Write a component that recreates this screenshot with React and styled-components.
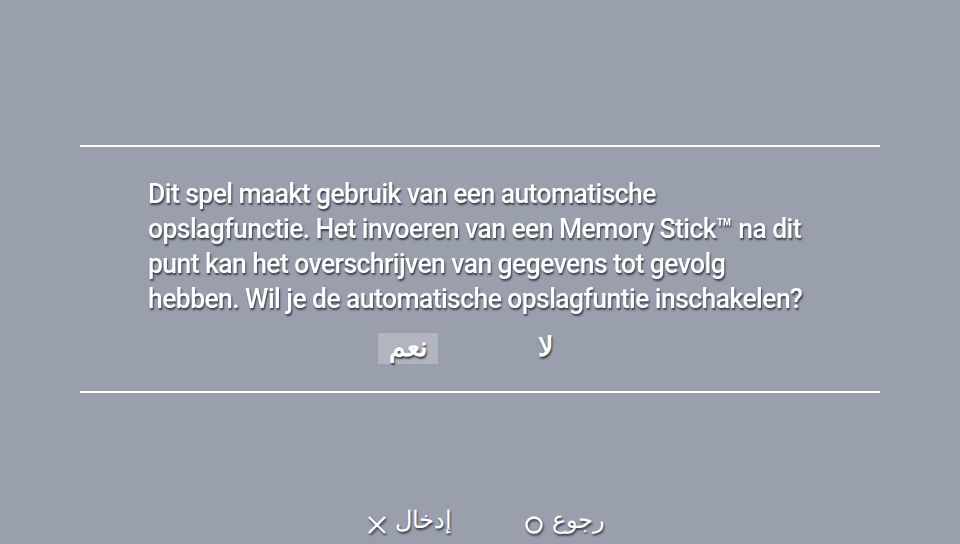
import React from 'react'
import styled, { createGlobalStyle } from 'styled-components'

const Global = createGlobalStyle`
  html, body {
    margin: 0;
    padding: 0;
    background: #9a9fae;
  }
  * { box-sizing: border-box; }
`;

const Screen = styled.div`
  width: 960px;
  height: 544px;
  background: #9a9fae;
  font-family: Roboto, "Noto Sans", sans-serif;
  color: #ffffff;
  display: flex;
  flex-direction: column;
  align-items: center;
  padding-top: 145px;
  overflow: hidden;
`;

const Rule = styled.div`
  width: 800px;
  height: 2px;
  background: #ffffff;
`;

const Dialog = styled.div`
  width: 800px;
  height: 244px;
  display: flex;
  flex-direction: column;
  padding: 29px 0 0 68px;
`;

const Message = styled.p`
  margin: 0;
  font-size: 28px;
  font-weight: 500;
  line-height: 35px;
  letter-spacing: -0.6px;
  transform: scaleX(0.947);
  transform-origin: left top;
  width: 780px;
  text-shadow: 1px 2px 2px rgba(40, 42, 52, 0.85);
`;

const Choices = styled.div`
  display: flex;
  gap: 77px;
  margin: 17px 0 0 230px;
`;

const Choice = styled.div`
  width: 60px;
  height: 31px;
  display: flex;
  align-items: center;
  justify-content: center;
  font-size: 27px;
  font-weight: 600;
  direction: rtl;
  padding-bottom: 4px;
  background: ${p => (p.selected ? '#b3b5be' : 'transparent')};
  text-shadow: 1px 2px 2px rgba(40, 42, 52, 0.85);
`;

const Footer = styled.div`
  display: flex;
  gap: 72px;
  margin-top: 112px;
  margin-left: 12px;
`;

const Hint = styled.div`
  display: flex;
  align-items: center;
  gap: 8px;
  font-size: 24px;
  text-shadow: 1px 2px 2px rgba(40, 42, 52, 0.85);
`;

const Glyph = styled.svg`
  width: 20px;
  height: 20px;
  margin-top: 10px;
  filter: drop-shadow(1px 2px 1px rgba(40, 42, 52, 0.85));
`;

const Cross = () => (
  <Glyph viewBox="0 0 20 20">
    <path d="M2 2 L18 18 M18 2 L2 18" stroke="#fff" strokeWidth="2.4" fill="none" />
  </Glyph>
);

const Circle = () => (
  <Glyph viewBox="0 0 20 20">
    <circle cx="10" cy="10" r="7.5" stroke="#fff" strokeWidth="2.4" fill="none" />
  </Glyph>
);

const App = () => {
  return (
    <Screen>
      <Global />
      <Rule />
      <Dialog>
        <Message>
          Dit spel maakt gebruik van een automatische<br />
          opslagfunctie. Het invoeren van een Memory Stick™ na dit<br />
          punt kan het overschrijven van gegevens tot gevolg<br />
          hebben. Wil je de automatische opslagfuntie inschakelen?
        </Message>
        <Choices>
          <Choice selected>نعم</Choice>
          <Choice>لا</Choice>
        </Choices>
      </Dialog>
      <Rule />
      <Footer>
        <Hint><Cross /><span>إدخال</span></Hint>
        <Hint><Circle /><span>رجوع</span></Hint>
      </Footer>
    </Screen>
  )
}

export default App
